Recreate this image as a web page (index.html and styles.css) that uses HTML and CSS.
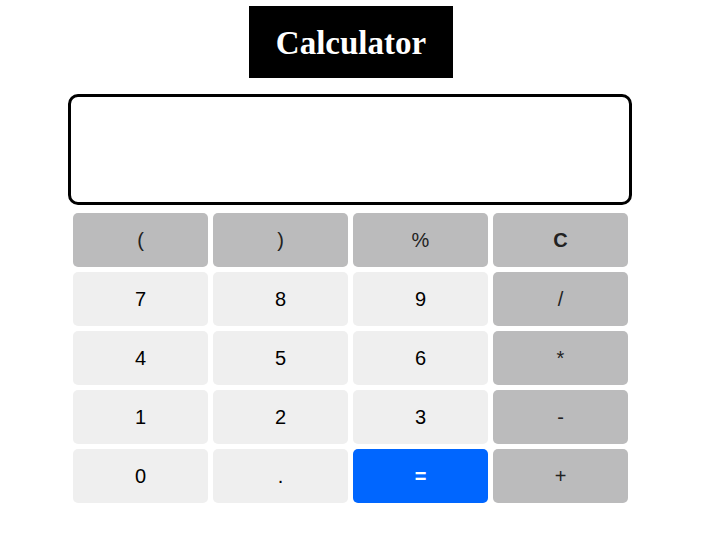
FILE: index.html
```html
<!DOCTYPE html>
<html>
<head>
<meta charset="utf-8">
<link rel="stylesheet" href="styles.css">
</head>
<body>
<div class="calc">
  <div class="title-wrap"><h1 class="title">Calculator</h1></div>
  <div class="display"></div>
  <div class="keys">
    <button class="key op">(</button>
    <button class="key op">)</button>
    <button class="key op">%</button>
    <button class="key op bold">C</button>
    <button class="key">7</button>
    <button class="key">8</button>
    <button class="key">9</button>
    <button class="key op">/</button>
    <button class="key">4</button>
    <button class="key">5</button>
    <button class="key">6</button>
    <button class="key op">*</button>
    <button class="key">1</button>
    <button class="key">2</button>
    <button class="key">3</button>
    <button class="key op">-</button>
    <button class="key">0</button>
    <button class="key">.</button>
    <button class="key eq">=</button>
    <button class="key op">+</button>
  </div>
</div>
</body>
</html>
```
FILE: styles.css
```css
html, body {
  margin: 0;
  padding: 0;
  background: #fff;
}
.calc {
  width: 564px;
  margin-left: 68px;
  padding-top: 6px;
}
.title-wrap {
  display: flex;
  justify-content: center;
  padding-left: 2px;
}
.title {
  margin: 0;
  background: #000;
  color: #fff;
  font-family: "Liberation Serif", "Times New Roman", serif;
  font-weight: bold;
  font-size: 33px;
  line-height: 38px;
  padding: 18px 27px 16px;
}
.display {
  margin-top: 16px;
  height: 105px;
  border: 3px solid #000;
  border-radius: 10px;
}
.keys {
  margin-top: 8px;
  padding: 0 4px 0 5px;
  display: grid;
  grid-template-columns: repeat(4, 135px);
  grid-auto-rows: 54px;
  gap: 5px;
}
.key {
  border: none;
  border-radius: 5px;
  background: #efefef;
  color: #000;
  font-family: "Liberation Sans", Arial, sans-serif;
  font-size: 20px;
  padding: 0;
  margin: 0;
}
.key.op {
  background: #bbbbbc;
  color: #222;
}
.key.bold {
  font-weight: bold;
}
.key.eq {
  background: #0066ff;
  color: #fff;
  font-weight: bold;
}
```
